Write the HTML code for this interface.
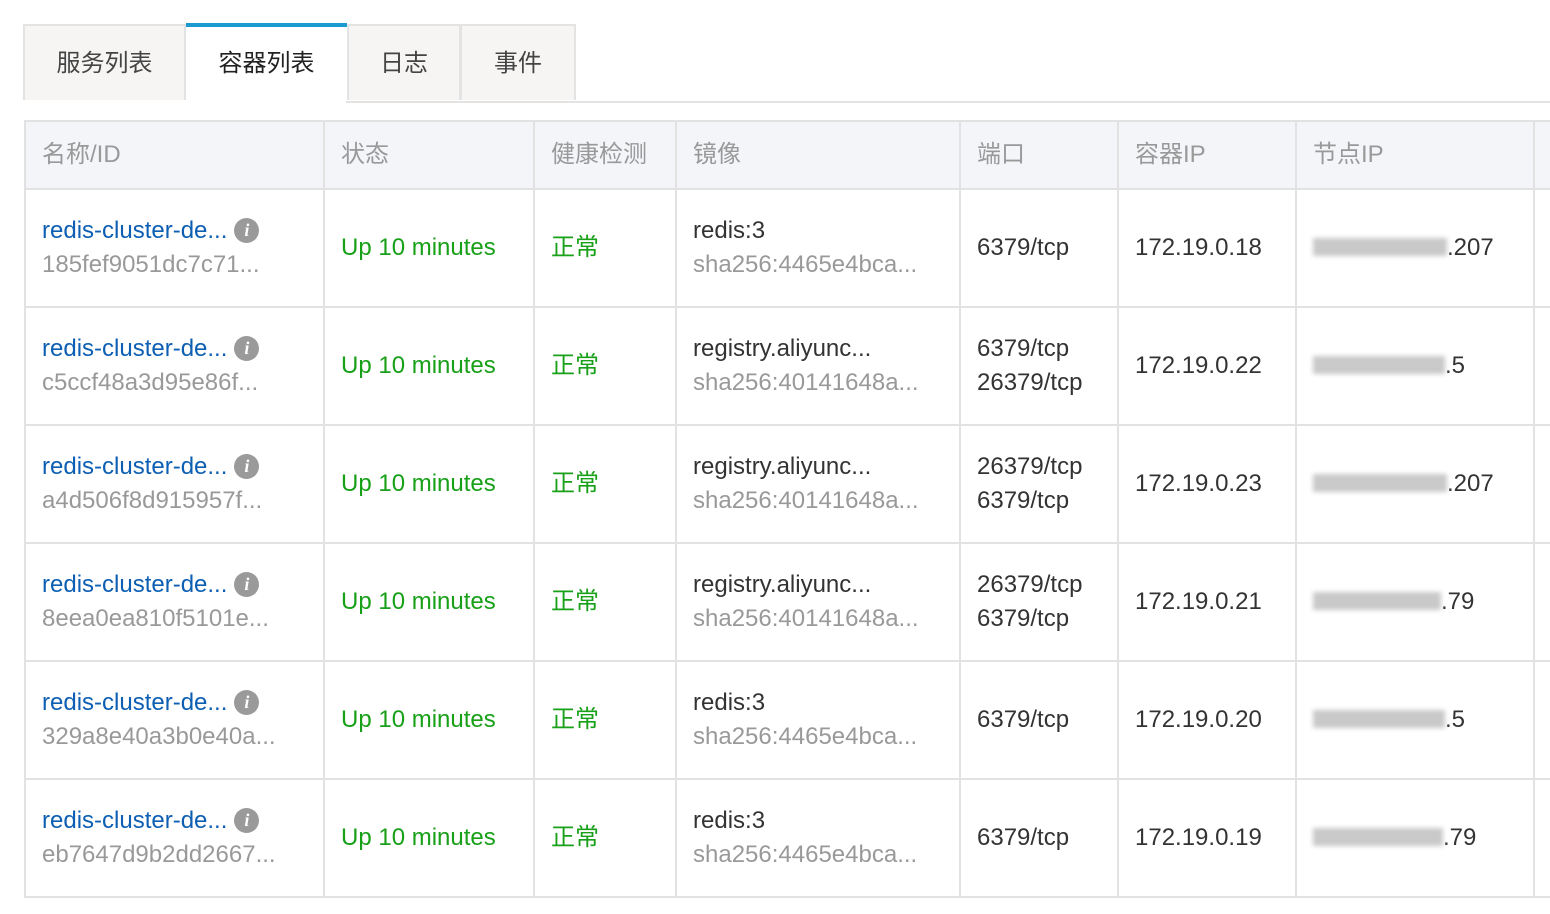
<!DOCTYPE html>
<html><head><meta charset="utf-8"><style>
body{margin:0;width:1550px;height:914px;background:#fff;overflow:hidden;font-family:"Liberation Sans","Noto Sans CJK SC",sans-serif;position:relative}
.tab{position:absolute;top:24px;height:76px;background:#f6f5f4;border:2px solid #e3e3e3;border-bottom:none;font-size:24px;color:#444;text-align:center;line-height:76px;box-sizing:border-box}
.tab.act{background:#fff;border-top:4px solid #1a9ad0;border-left:none;border-right:none;color:#222;line-height:74px;top:23px;height:80px}
.bl{position:absolute;top:101px;left:346px;right:0;height:2px;background:#e3e3e3}
table{position:absolute;left:24px;top:120px;width:1569px;border-collapse:collapse;table-layout:fixed;font-size:24px}
td,th{border:2px solid #e2e2e2;padding:0 0 0 16px;text-align:left;vertical-align:middle;line-height:34px;overflow:hidden;white-space:nowrap}
th{height:66px;background:#f3f5f9;color:#999;font-weight:normal;font-size:24px}
td{height:116px;color:#333}
.l{color:#0d5fb3}.g{color:#999}.gr{color:#18a018}
.i{display:inline-block;width:25px;height:25px;border-radius:50%;background:#9a9a9a;color:#fff;font:italic bold 18px/25px "Liberation Serif",serif;text-align:center;vertical-align:2px;margin-left:7px}
.bz{display:inline-block;height:18px;background:#c9c9c9;filter:blur(2.5px);vertical-align:-1px}
</style></head><body>
<div class="tab" style="left:23px;width:163px">服务列表</div>
<div class="tab act" style="left:186px;width:161px">容器列表</div>
<div class="tab" style="left:347px;width:114px">日志</div>
<div class="tab" style="left:460px;width:116px">事件</div>
<div class="bl"></div>
<table>
<colgroup><col style="width:299px"><col style="width:210px"><col style="width:142px"><col style="width:284px"><col style="width:158px"><col style="width:178px"><col style="width:238px"><col style="width:60px"></colgroup>
<tr><th>名称/ID</th><th>状态</th><th>健康检测</th><th>镜像</th><th>端口</th><th>容器IP</th><th>节点IP</th><th></th></tr>
<tr><td><span class="l">redis-cluster-de...</span><span class="i">i</span><br><span class="g">185fef9051dc7c71...</span></td><td class="gr">Up 10 minutes</td><td class="gr">正常</td><td>redis:3<br><span class="g">sha256:4465e4bca...</span></td><td>6379/tcp</td><td>172.19.0.18</td><td><span class="bz" style="width:134px"></span>.207</td><td></td></tr>
<tr><td><span class="l">redis-cluster-de...</span><span class="i">i</span><br><span class="g">c5ccf48a3d95e86f...</span></td><td class="gr">Up 10 minutes</td><td class="gr">正常</td><td>registry.aliyunc...<br><span class="g">sha256:40141648a...</span></td><td>6379/tcp<br>26379/tcp</td><td>172.19.0.22</td><td><span class="bz" style="width:132px"></span>.5</td><td></td></tr>
<tr><td><span class="l">redis-cluster-de...</span><span class="i">i</span><br><span class="g">a4d506f8d915957f...</span></td><td class="gr">Up 10 minutes</td><td class="gr">正常</td><td>registry.aliyunc...<br><span class="g">sha256:40141648a...</span></td><td>26379/tcp<br>6379/tcp</td><td>172.19.0.23</td><td><span class="bz" style="width:134px"></span>.207</td><td></td></tr>
<tr><td><span class="l">redis-cluster-de...</span><span class="i">i</span><br><span class="g">8eea0ea810f5101e...</span></td><td class="gr">Up 10 minutes</td><td class="gr">正常</td><td>registry.aliyunc...<br><span class="g">sha256:40141648a...</span></td><td>26379/tcp<br>6379/tcp</td><td>172.19.0.21</td><td><span class="bz" style="width:128px"></span>.79</td><td></td></tr>
<tr><td><span class="l">redis-cluster-de...</span><span class="i">i</span><br><span class="g">329a8e40a3b0e40a...</span></td><td class="gr">Up 10 minutes</td><td class="gr">正常</td><td>redis:3<br><span class="g">sha256:4465e4bca...</span></td><td>6379/tcp</td><td>172.19.0.20</td><td><span class="bz" style="width:132px"></span>.5</td><td></td></tr>
<tr><td><span class="l">redis-cluster-de...</span><span class="i">i</span><br><span class="g">eb7647d9b2dd2667...</span></td><td class="gr">Up 10 minutes</td><td class="gr">正常</td><td>redis:3<br><span class="g">sha256:4465e4bca...</span></td><td>6379/tcp</td><td>172.19.0.19</td><td><span class="bz" style="width:130px"></span>.79</td><td></td></tr>
</table>
</body></html>
